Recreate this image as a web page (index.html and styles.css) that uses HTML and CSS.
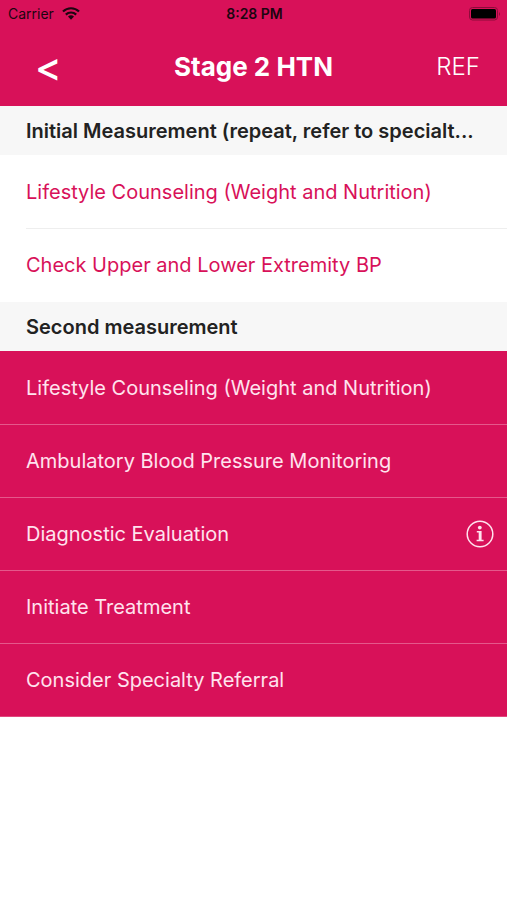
FILE: index.html
```html
<!doctype html>
<html lang="en">
<head>
<meta charset="utf-8">
<meta name="viewport" content="width=device-width, initial-scale=1">
<link rel="stylesheet" href="styles.css">
<title>Stage 2 HTN</title>
</head>
<body>
<header class="header">
  <div class="status">
    <div class="carrier">
      <span>Carrier</span>
      <svg class="wifi" viewBox="0 0 18 13" aria-hidden="true">
        <path d="M1 4.5a11.5 11.5 0 0 1 16 0M3.8 7.6a7.5 7.5 0 0 1 10.4 0" fill="none" stroke="#1c0510" stroke-width="2.2"/>
        <path d="M6 9.6a4.3 4.3 0 0 1 6 0L9 12.8z" fill="#1c0510"/>
      </svg>
    </div>
    <span class="time">8:28 PM</span>
    <svg class="battery" viewBox="0 0 32 14" aria-hidden="true">
      <rect x=".5" y=".5" width="28" height="12.5" rx="3" fill="none" stroke="#8c0c3a"/>
      <rect x="2" y="2" width="25" height="9.5" rx="1.5" fill="#000"/>
      <path d="M30 5q2 2 0 4z" fill="#8c0c3a"/>
    </svg>
  </div>
  <nav class="navbar">
    <button class="back" type="button" aria-label="Back">&lt;</button>
    <h1>Stage 2 HTN</h1>
    <button class="ref" type="button">REF</button>
  </nav>
</header>

<main>
  <h2>Initial Measurement (repeat, refer to specialt...</h2>
  <ul class="list">
    <li><a href="#">Lifestyle Counseling (Weight and Nutrition)</a></li>
    <li><a href="#">Check Upper and Lower Extremity BP</a></li>
  </ul>

  <h2>Second measurement</h2>
  <ul class="list list-active">
    <li><a href="#">Lifestyle Counseling (Weight and Nutrition)</a></li>
    <li><a href="#">Ambulatory Blood Pressure Monitoring</a></li>
    <li>
      <a href="#">Diagnostic Evaluation</a>
      <button class="info" type="button" aria-label="More info">
        <svg viewBox="0 0 28 28" aria-hidden="true">
          <circle cx="14" cy="14" r="12.8" fill="none" stroke="#ffe3ee" stroke-width="1.5"/>
          <circle cx="13.8" cy="7.6" r="1.9" fill="#ffe3ee"/>
          <path d="M10.8 11h4.8v8.8h2v1.5h-7v-1.5h2.1v-7.3h-1.9z" fill="#ffe3ee"/>
        </svg>
      </button>
    </li>
    <li><a href="#">Initiate Treatment</a></li>
    <li><a href="#">Consider Specialty Referral</a></li>
  </ul>
</main>
</body>
</html>
```

FILE: styles.css
```css
* {
    box-sizing: border-box;
}
body {
    margin: 0;
    background: #fff;
    color: #222;
    font-family: Inter, "Liberation Sans", sans-serif;
    font-size: 20px;
    line-height: 24px;
}
h1,
h2,
ul {
    margin: 0;
    padding: 0;
}
a {
    color: inherit;
    text-decoration: none;
}
button {
    padding: 0;
    border: 0;
    background: none;
    color: inherit;
    font: inherit;
    cursor: pointer;
}
svg {
    display: block;
}
.header {
    background: #d81159;
    color: #fff;
}
.status {
    display: grid;
    grid-template-columns: 1fr auto 1fr;
    align-items: center;
    height: 27px;
    padding: 0 6px 0 8px;
    color: #1c0510;
    font-size: 14px;
}
.carrier {
    display: flex;
    align-items: center;
    gap: 8px;
}
.wifi {
    width: 18px;
    height: 13px;
}
.time {
    font-weight: 600;
}
.battery {
    justify-self: end;
    width: 32px;
    height: 14px;
}
.navbar {
    display: grid;
    grid-template-columns: 1fr auto 1fr;
    align-items: center;
    height: 79px;
    padding: 0 27px;
}
.navbar h1 {
    font-size: 26px;
    font-weight: 700;
}
.back {
    justify-self: start;
    padding-left: 8px;
    font-size: 40px;
    font-weight: 500;
}
.ref {
    justify-self: end;
    font-size: 24px;
    font-weight: 300;
}
h2 {
    overflow: hidden;
    padding: 13px 26px 12px;
    background: #f7f7f7;
    font-size: 20px;
    font-weight: 600;
    line-height: 24px;
    white-space: nowrap;
    text-overflow: ellipsis;
}
.list {
    border-bottom: 1px solid #fff;
    color: #d81159;
    list-style: none;
}
.list li {
    display: flex;
    align-items: center;
    justify-content: space-between;
    min-height: 73px;
    padding: 0 13px 0 26px;
    background: linear-gradient(#eee, #eee) 26px 0 / 100% 1px no-repeat;
}
.list li:first-child {
    background: none;
}
.list-active {
    border-color: #e0477d;
    background: #d81159;
    color: #ffe3ee;
}
.list-active li {
    background: linear-gradient(#e5588b, #e5588b) 0 0 / 100% 1px no-repeat;
}
.info svg {
    width: 28px;
    height: 28px;
}
```
